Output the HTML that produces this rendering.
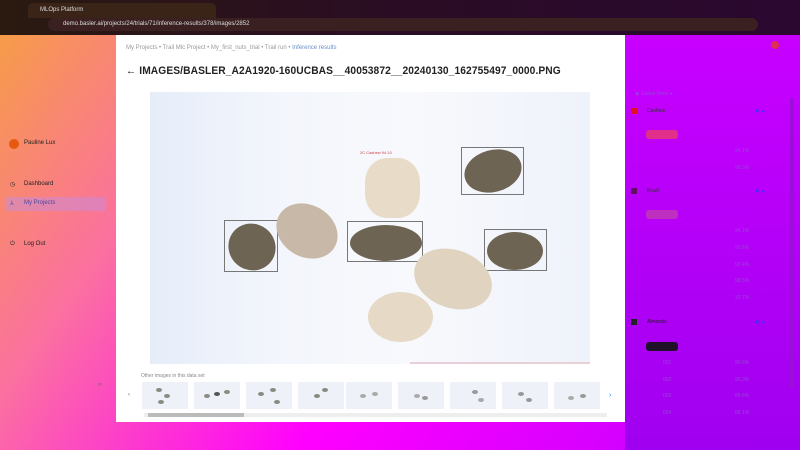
<!DOCTYPE html><html><head><style>
*{margin:0;padding:0;box-sizing:border-box}
body{width:800px;height:450px;overflow:hidden;font-family:"Liberation Sans",sans-serif;position:relative;
background:linear-gradient(125deg,#f6a040 0%,#fb70a0 25%,#f0f 55%,#b0f 100%);}
.top{position:absolute;left:0;top:0;width:800px;height:35px;background:linear-gradient(90deg,#2a1a10,#2a0c24 50%,#2a0830);}
.tab{position:absolute;left:28px;top:3px;width:188px;height:15px;background:#3a2418;border-radius:5px 5px 0 0;color:#ddd;font-size:6px;padding:4px 12px}
.url{position:absolute;left:48px;top:18px;width:710px;height:13px;background:#3a2020;border-radius:7px;color:#ddd;font-size:6px;padding:3px 15px}
.card{position:absolute;left:116px;top:35px;width:509px;height:387px;background:#fff}
.right{position:absolute;left:625px;top:35px;width:175px;height:415px;background:linear-gradient(180deg,#c800ff,#a000f0)}
.crumb{position:absolute;left:10px;top:10px;font-size:6px;color:#999}
.crumb b{color:#6b8fc8;font-weight:normal}
h1{position:absolute;left:10px;top:30px;font-size:11px;font-weight:bold;color:#222;letter-spacing:.1px;transform:scaleX(.93);transform-origin:left}
.img{position:absolute;left:34px;top:57px;width:440px;height:272px;background:linear-gradient(90deg,#e6edf9,#f3f6fc 30%,#f8f9fd 60%,#eef2fa);}
.nut{position:absolute;border-radius:50%}
.box{position:absolute;border:1px solid #777}
.side{position:absolute;font-size:6px;color:#222}
.th{position:absolute;top:347px;width:46px;height:27px;background:#eef1f7}
.th i{position:absolute;width:6px;height:4px;border-radius:50%;background:#8a8a80}
.row{position:absolute;font-size:5px;color:#9844d8}
</style></head><body>
<div class="top"><div class="tab">MLOps Platform</div><div class="url">demo.basler.ai/projects/24/trials/71/inference-results/378/images/2852</div></div>
<div class="side" style="left:9px;top:139px;width:10px;height:10px;border-radius:50%;background:#e65a10"></div>
<div class="side" style="left:24px;top:140px">Pauline Lux</div>
<div class="side" style="left:10px;top:181px">◷</div><div class="side" style="left:24px;top:181px">Dashboard</div>
<div style="position:absolute;left:6px;top:197px;width:100px;height:14px;background:rgba(200,140,220,.5);border-radius:2px"></div>
<div class="side" style="left:10px;top:200px;color:#4a4aa0">⅄</div><div class="side" style="left:24px;top:200px;color:#4a4aa0">My Projects</div>
<div class="side" style="left:10px;top:241px">⏻</div><div class="side" style="left:24px;top:241px">Log Out</div>
<div class="side" style="left:98px;top:382px;color:#666">«</div>
<div class="card">
<div class="crumb">My Projects • Trail Mlc Project • My_first_nuts_trial • Trail run • <b>Inference results</b></div>
<h1>← IMAGES/BASLER_A2A1920-160UCBAS__40053872__20240130_162755497_0000.PNG</h1>
<div class="img">
<div class="nut" style="left:314px;top:58px;width:58px;height:42px;background:#6e6454;transform:rotate(-15deg)"></div>
<div class="box" style="left:311px;top:55px;width:63px;height:48px"></div>
<div class="nut" style="left:78px;top:132px;width:48px;height:46px;background:#6e6454;transform:rotate(40deg)"></div>
<div class="box" style="left:74px;top:128px;width:54px;height:52px"></div>
<div class="nut" style="left:125px;top:113px;width:64px;height:52px;background:#c8b8a8;transform:rotate(30deg)"></div>
<div class="nut" style="left:200px;top:133px;width:72px;height:36px;background:#6e6454"></div>
<div class="box" style="left:197px;top:129px;width:76px;height:41px"></div>
<div class="nut" style="left:337px;top:140px;width:56px;height:38px;background:#6e6454"></div>
<div class="box" style="left:334px;top:137px;width:63px;height:42px"></div>
<div class="nut" style="left:215px;top:66px;width:55px;height:60px;background:#e8dcc8;border-radius:40%"></div>
<div class="nut" style="left:263px;top:158px;width:80px;height:58px;background:#e0d4c0;transform:rotate(20deg)"></div>
<div class="nut" style="left:218px;top:200px;width:65px;height:50px;background:#e6dac6"></div>
<div style="position:absolute;left:210px;top:58px;font-size:4px;color:#c44">2C Cashew 94.10</div>
<div style="position:absolute;left:260px;top:270px;width:180px;height:2px;background:#e8d0d8"></div>
</div>
<div style="position:absolute;left:25px;top:338px;font-size:5px;color:#888">Other images in this data set</div>
<div style="position:absolute;left:12px;top:357px;font-size:6px;color:#666">‹</div>
<div style="position:absolute;left:493px;top:357px;font-size:7px;color:#18f">›</div>
<div class="th" style="left:26px"><i style="left:14px;top:6px"></i><i style="left:22px;top:12px"></i><i style="left:16px;top:18px"></i></div>
<div class="th" style="left:78px"><i style="left:10px;top:12px"></i><i style="left:20px;top:10px;background:#555"></i><i style="left:30px;top:8px"></i></div>
<div class="th" style="left:130px"><i style="left:12px;top:10px"></i><i style="left:24px;top:6px"></i><i style="left:28px;top:18px"></i></div>
<div class="th" style="left:182px"><i style="left:16px;top:12px"></i><i style="left:24px;top:6px"></i></div>
<div class="th" style="left:230px"><i style="left:14px;top:12px;background:#aaa"></i><i style="left:26px;top:10px;background:#aaa"></i></div>
<div class="th" style="left:282px"><i style="left:16px;top:12px;background:#aaa"></i><i style="left:24px;top:14px;background:#999"></i></div>
<div class="th" style="left:334px"><i style="left:22px;top:8px;background:#999"></i><i style="left:28px;top:16px;background:#aaa"></i></div>
<div class="th" style="left:386px"><i style="left:16px;top:10px;background:#999"></i><i style="left:24px;top:16px;background:#999"></i></div>
<div class="th" style="left:438px"><i style="left:14px;top:14px;background:#aaa"></i><i style="left:26px;top:12px;background:#999"></i></div>
<div style="position:absolute;left:28px;top:378px;width:463px;height:4px;background:#eee"></div>
<div style="position:absolute;left:32px;top:378px;width:96px;height:4px;background:#bbb"></div>
</div>
<div class="right">
<div style="position:absolute;left:146px;top:6px;width:8px;height:8px;border-radius:50%;background:#e03050"></div>
<div class="row" style="left:10px;top:56px">◉ Global filters ●</div>
<div style="position:absolute;left:6px;top:73px;width:6px;height:6px;background:#e01020"></div><div class="row" style="left:22px;top:73px;color:#333">Cashew</div>
<div class="row" style="left:130px;top:73px;color:#33f">◉ ▲</div>
<div style="position:absolute;left:21px;top:95px;width:32px;height:9px;background:#e0308a;border-radius:3px"></div>
<div class="row" style="left:110px;top:113px">94.1%</div><div class="row" style="left:110px;top:130px">90.3%</div>
<div style="position:absolute;left:6px;top:153px;width:6px;height:6px;background:#601060"></div><div class="row" style="left:22px;top:153px;color:#333">Brazil</div>
<div class="row" style="left:130px;top:153px;color:#33f">◉ ▲</div>
<div style="position:absolute;left:21px;top:175px;width:32px;height:9px;background:#c030c0;border-radius:3px"></div>
<div class="row" style="left:110px;top:193px">94.1%</div><div class="row" style="left:110px;top:210px">92.6%</div><div class="row" style="left:110px;top:227px">93.4%</div><div class="row" style="left:110px;top:243px">98.5%</div><div class="row" style="left:110px;top:260px">33.7%</div>
<div style="position:absolute;left:6px;top:284px;width:6px;height:6px;background:#222"></div><div class="row" style="left:22px;top:284px;color:#222">Almonds</div>
<div class="row" style="left:130px;top:284px;color:#33f">◉ ▲</div>
<div style="position:absolute;left:21px;top:307px;width:32px;height:9px;background:#20102a;border-radius:3px"></div>
<div class="row" style="left:38px;top:325px">001</div><div class="row" style="left:110px;top:325px">90.6%</div>
<div class="row" style="left:38px;top:342px">002</div><div class="row" style="left:110px;top:342px">90.3%</div>
<div class="row" style="left:38px;top:358px">003</div><div class="row" style="left:110px;top:358px">89.6%</div>
<div class="row" style="left:38px;top:375px">004</div><div class="row" style="left:110px;top:375px">88.1%</div>
<div style="position:absolute;left:165px;top:63px;width:4px;height:290px;background:#9a10d8;border-radius:2px"></div>
</div>
</body></html>
